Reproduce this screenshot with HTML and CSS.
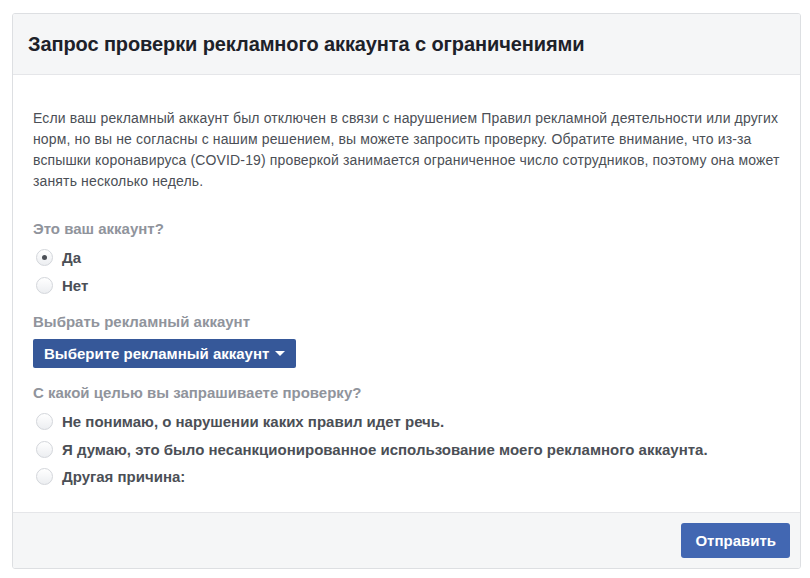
FILE: index.html
```html
<!doctype html>
<html>
<head>
<meta charset="utf-8">
<title>Запрос проверки рекламного аккаунта с ограничениями</title>
<link rel="stylesheet" href="styles.css">
</head>
<body>
<div class="box">
	<div class="box-hd">
		<h2>Запрос проверки рекламного аккаунта с ограничениями</h2>
	</div>
	<div class="box-bd">
		<p class="intro">Если ваш рекламный аккаунт был отключен в связи с нарушением Правил рекламной деятельности или других норм, но вы не согласны с нашим решением, вы можете запросить проверку. Обратите внимание, что из-за вспышки коронавируса (COVID-19) проверкой занимается ограниченное число сотрудников, поэтому она может занять несколько недель.</p>

		<div class="field">
			<div class="label">Это ваш аккаунт?</div>
			<ul class="radios">
				<li><span class="radio checked"></span>Да</li>
				<li><span class="radio"></span>Нет</li>
			</ul>
		</div>

		<div class="field">
			<div class="label">Выбрать рекламный аккаунт</div>
			<a class="select-btn" href="javascript:;">Выберите рекламный аккаунт<i class="caret"></i></a>
		</div>

		<div class="field">
			<div class="label">С какой целью вы запрашиваете проверку?</div>
			<ul class="radios">
				<li><span class="radio"></span>Не понимаю, о нарушении каких правил идет речь.</li>
				<li><span class="radio"></span>Я думаю, это было несанкционированное использование моего рекламного аккаунта.</li>
				<li><span class="radio"></span>Другая причина:</li>
			</ul>
		</div>
	</div>
	<div class="box-ft">
		<a class="send-btn" href="javascript:;">Отправить</a>
	</div>
</div>
</body>
</html>
```

FILE: styles.css
```css
*{padding:0; margin:0;}
body{font-family:"Liberation Sans", Arial, sans-serif; background:#fff; color:#4b4f56;}
.box{margin:13px 9px 0 12px; border:1px solid #dddfe2; border-radius:3px; overflow:hidden;}
.box-hd{background:#f5f6f7; border-bottom:1px solid #e5e6e9; height:60px; display:flex; align-items:center; padding:0 15px;}
.box-hd h2{font-size:20px; font-weight:bold; color:#1d2129; letter-spacing:-0.1px;}
.box-bd{padding:33px 20px 21px;}
.intro{font-size:14px; line-height:21px; color:#4b4f56; letter-spacing:0.14px;}
.field{margin-top:28px;}
.field + .field{margin-top:14px;}
.label{font-size:15px; font-weight:bold; color:#90949c; line-height:18px;}
.radios{list-style:none; margin-top:6px;}
.radios li{display:flex; align-items:center; height:27.5px; font-size:15px; font-weight:bold; color:#4b4f56;}
.radio{width:15px; height:15px; border-radius:50%; border:1px solid #d3d6db; background:linear-gradient(#fff,#eceef1); margin:0 9px 0 3px; display:flex; align-items:center; justify-content:center;}
.radio.checked:after{content:""; width:5px; height:5px; border-radius:50%; background:#4b4f56;}
.select-btn{display:inline-flex; align-items:center; margin:8px 0 2px; height:29px; padding:0 11px; background:#365899; border-radius:2px; color:#fff; font-size:15px; font-weight:bold; text-decoration:none;}
.caret{width:0; height:0; border-left:5px solid transparent; border-right:5px solid transparent; border-top:5px solid #fff; margin-left:6px;}
.box-ft{background:#f5f6f7; border-top:1px solid #e5e6e9; height:55px; display:flex; align-items:center; justify-content:flex-end; padding:0 10px;}
.send-btn{display:flex; align-items:center; height:35px; padding:0 14px; background:#4267b2; border-radius:3px; color:#fff; font-size:15px; font-weight:bold; text-decoration:none;}
```
